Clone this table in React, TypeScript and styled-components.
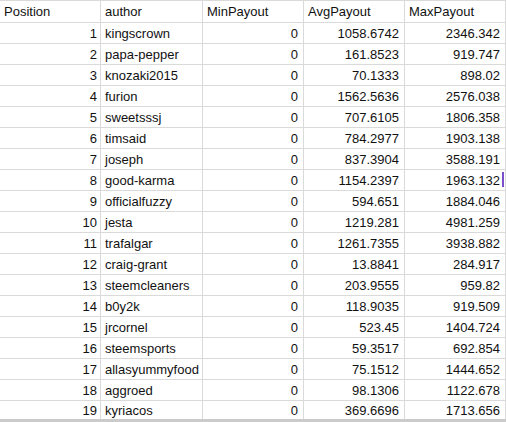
import React from "react";
import styled, { createGlobalStyle } from "styled-components";

const Global = createGlobalStyle`
  html, body { margin: 0; padding: 0; background: #fff; }
  body { font-family: "Liberation Sans", Arial, sans-serif; overflow: hidden; }
`;

const Sheet = styled.div`
  width: 506px;
  height: 422px;
  overflow: hidden;
  border-top: 1px solid #dadada;
  box-sizing: border-box;
  position: relative;
`;

const Row = styled.div<{ $header?: boolean; $last?: boolean }>`
  display: grid;
  grid-template-columns: 101px 102px 101px 101px 101px;
  height: ${(p) => (p.$header ? 22 : 21)}px;
  border-bottom: ${(p) => (p.$last ? "3px solid #cbcbcb" : "1px solid #dadada")};
  box-sizing: border-box;
`;

const Cell = styled.div<{ $right?: boolean; $first?: boolean }>`
  position: relative;
  border-right: 1px solid #dadada;
  box-sizing: border-box;
  display: flex;
  align-items: center;
  justify-content: ${(p) => (p.$right ? "flex-end" : "flex-start")};
  padding: ${(p) => (p.$right ? (p.$first ? "0 3px 0 0" : "0 5px 0 0") : "0 0 0 4px")};
  font-size: 13px;
  color: #111;
  white-space: nowrap;
  overflow: hidden;
`;

const Cursor = styled.span`
  position: absolute;
  right: 1px;
  top: 2px;
  width: 2px;
  height: 15px;
  background: #7b4fc9;
`;

const rows: [string, string, string, string][] = [
  ["kingscrown", "0", "1058.6742", "2346.342"],
  ["papa-pepper", "0", "161.8523", "919.747"],
  ["knozaki2015", "0", "70.1333", "898.02"],
  ["furion", "0", "1562.5636", "2576.038"],
  ["sweetsssj", "0", "707.6105", "1806.358"],
  ["timsaid", "0", "784.2977", "1903.138"],
  ["joseph", "0", "837.3904", "3588.191"],
  ["good-karma", "0", "1154.2397", "1963.132"],
  ["officialfuzzy", "0", "594.651", "1884.046"],
  ["jesta", "0", "1219.281", "4981.259"],
  ["trafalgar", "0", "1261.7355", "3938.882"],
  ["craig-grant", "0", "13.8841", "284.917"],
  ["steemcleaners", "0", "203.9555", "959.82"],
  ["b0y2k", "0", "118.9035", "919.509"],
  ["jrcornel", "0", "523.45", "1404.724"],
  ["steemsports", "0", "59.3517", "692.854"],
  ["allasyummyfood", "0", "75.1512", "1444.652"],
  ["aggroed", "0", "98.1306", "1122.678"],
  ["kyriacos", "0", "369.6696", "1713.656"],
];

export default function App() {
  return (
    <>
      <Global />
      <Sheet>
        <Row $header>
          <Cell>Position</Cell>
          <Cell>author</Cell>
          <Cell>MinPayout</Cell>
          <Cell>AvgPayout</Cell>
          <Cell>MaxPayout</Cell>
        </Row>
        {rows.map((r, i) => (
          <Row key={i} $last={i === rows.length - 1}>
            <Cell $right $first>{i + 1}</Cell>
            <Cell>{r[0]}</Cell>
            <Cell $right>{r[1]}</Cell>
            <Cell $right>{r[2]}</Cell>
            <Cell $right>
              {r[3]}
              {i === 7 && <Cursor />}
            </Cell>
          </Row>
        ))}
      </Sheet>
    </>
  );
}
